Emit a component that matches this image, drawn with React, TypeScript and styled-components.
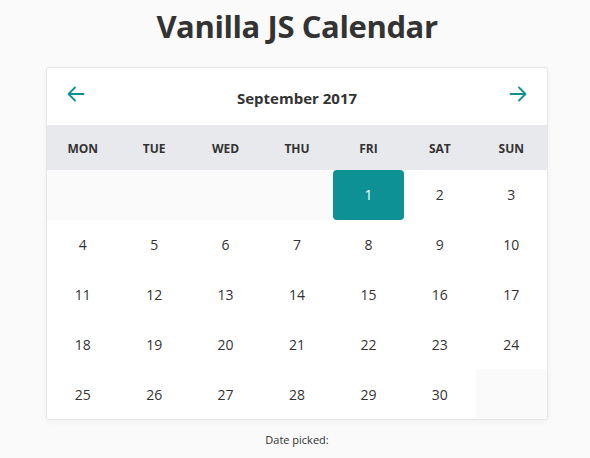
import { FC } from 'react';
import styled, { createGlobalStyle } from 'styled-components';

const GlobalStyle = createGlobalStyle`
  html, body {
    margin: 0;
    padding: 0;
    background: #fafafa;
    font-family: "Open Sans", "Noto Sans", sans-serif;
    color: #333;
  }
`;

const WEEKDAYS = ['Mon', 'Tue', 'Wed', 'Thu', 'Fri', 'Sat', 'Sun'];
const OFFSET = 4; // Sept 1 2017 is a Friday
const DAYS_IN_MONTH = 30;
const SELECTED = 1;

const Arrow: FC<{ dir: 'left' | 'right' }> = ({ dir }) => (
  <svg width="18" height="18" viewBox="0 0 18 18" fill="none">
    {dir === 'left' ? (
      <path d="M16.5 9H1.5M8 2.5L1.5 9L8 15.5" stroke="#0d9195" strokeWidth="1.8" strokeLinecap="round" strokeLinejoin="round" />
    ) : (
      <path d="M1.5 9H16.5M10 2.5L16.5 9L10 15.5" stroke="#0d9195" strokeWidth="1.8" strokeLinecap="round" strokeLinejoin="round" />
    )}
  </svg>
);

const App: FC = () => {
  const cells: (number | null)[] = [];
  for (let i = 0; i < OFFSET; i++) cells.push(null);
  for (let d = 1; d <= DAYS_IN_MONTH; d++) cells.push(d);
  while (cells.length % 7 !== 0) cells.push(null);

  return (
    <Page>
      <GlobalStyle />
      <Title>Vanilla JS Calendar</Title>
      <Calendar>
        <Header>
          <NavButton aria-label="Previous month">
            <Arrow dir="left" />
          </NavButton>
          <Month>September 2017</Month>
          <NavButton aria-label="Next month">
            <Arrow dir="right" />
          </NavButton>
        </Header>
        <Weekdays>
          {WEEKDAYS.map(w => (
            <Weekday key={w}>{w}</Weekday>
          ))}
        </Weekdays>
        <Days>
          {cells.map((d, i) => (
            <Day key={i} empty={d === null} selected={d === SELECTED}>
              {d}
            </Day>
          ))}
        </Days>
      </Calendar>
      <Picked>Date picked:</Picked>
    </Page>
  );
};

export default App;

const Page = styled.div`
  display: flex;
  flex-direction: column;
  align-items: center;
  padding: 4px 0 0 4px;
`;

const Title = styled.h1`
  margin: 0;
  font-size: 31px;
  font-weight: 700;
  line-height: 44px;
  color: #333;
  letter-spacing: -0.4px;
`;

const Calendar = styled.div`
  margin-top: 19px;
  width: 500px;
  background: #fff;
  border: 1px solid #e6e6e6;
  border-radius: 3px;
  box-shadow: 0 2px 6px rgba(0, 0, 0, 0.04);
  overflow: hidden;
`;

const Header = styled.div`
  height: 57px;
  display: flex;
  align-items: center;
  justify-content: space-between;
  padding: 0 20px 5px;
  box-sizing: border-box;
`;

const NavButton = styled.button`
  border: 0;
  background: none;
  padding: 0;
  display: flex;
  cursor: pointer;
`;

const Month = styled.div`
  font-size: 15px;
  font-weight: 700;
  padding-top: 7px;
`;

const Weekdays = styled.div`
  display: grid;
  grid-template-columns: repeat(7, 1fr);
  height: 45px;
  background: #e8e9ed;
`;

const Weekday = styled.div`
  display: flex;
  align-items: center;
  justify-content: center;
  font-size: 12px;
  font-weight: 700;
  text-transform: uppercase;
  padding-top: 2px;
`;

const Days = styled.div`
  display: grid;
  grid-template-columns: repeat(7, 1fr);
  grid-auto-rows: 49.8px;
`;

const Day = styled.div<{ empty?: boolean; selected?: boolean }>`
  display: flex;
  align-items: center;
  justify-content: center;
  font-size: 14px;
  color: ${p => (p.selected ? '#fff' : '#333')};
  background: ${p => (p.selected ? '#0d9195' : p.empty ? '#fafafa' : '#fff')};
  border-radius: ${p => (p.selected ? '4px' : '0')};
  cursor: ${p => (p.empty ? 'default' : 'pointer')};
`;

const Picked = styled.div`
  margin-top: 12px;
  font-size: 11px;
`;
